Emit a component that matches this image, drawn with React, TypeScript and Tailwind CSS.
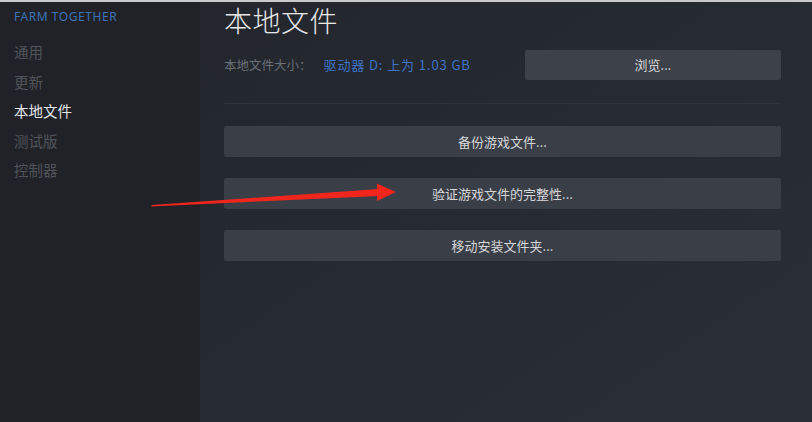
const cjk = { fontFamily: '"Noto Sans CJK SC", "Noto Sans", sans-serif' };

const navItems = [
  { label: "通用", active: false },
  { label: "更新", active: false },
  { label: "本地文件", active: true },
  { label: "测试版", active: false },
  { label: "控制器", active: false },
];

function ActionButton({ label }: { label: string }) {
  return (
    <button className="h-[31px] w-full rounded-[2px] bg-[#3a3e47] text-[13px] text-[#d6d7d9]">
      {label}
    </button>
  );
}

function Arrow() {
  return (
    <svg className="pointer-events-none absolute left-0 top-0" width="812" height="422">
      <defs>
        <filter id="blur" x="-10%" y="-50%" width="120%" height="200%">
          <feGaussianBlur stdDeviation="0.6" />
        </filter>
      </defs>
      <g filter="url(#blur)" fill="#f0261e">
        <polygon points="151,206.5 152,205 379,189 379,196" />
        <polygon points="377,183.5 396,192 377,201" />
      </g>
    </svg>
  );
}

export default function App() {
  return (
    <div className="relative flex h-[422px] w-[812px] flex-col overflow-hidden bg-[#23262d]" style={cjk}>
      <div className="h-[2px] w-full bg-[#c9cacd]" />
      <div className="flex flex-1">
        <aside className="w-[200px] bg-[#202227] pl-[14px] pt-[6px]">
          <div className="text-[12px] tracking-[0.55px] text-[#3d72b8]" style={{ fontFamily: '"Noto Sans", sans-serif' }}>
            FARM TOGETHER
          </div>
          <nav className="mt-[11px] flex flex-col">
            {navItems.map((item) => (
              <div
                key={item.label}
                className={`h-[29.5px] text-[14.5px] leading-[29.5px] ${item.active ? "text-[#e4e5e7]" : "text-[#50545b]"}`}
              >
                {item.label}
              </div>
            ))}
          </nav>
        </aside>
        <main className="flex-1 bg-gradient-to-br from-[#23262d] via-[#262a31] to-[#2a2e35] pl-[24px] pr-[31px]">
          <h1 className="mt-[-1px] text-[28px] font-light leading-[38px] tracking-[0.5px] text-[#e8e8e9]">本地文件</h1>
          <div className="mt-[11px] flex items-center">
            <div className="flex-1 text-[12.5px]">
              <span className="text-[#6b7078]">本地文件大小：</span>
              <span className="ml-[12px] text-[13px] tracking-[0.9px] text-[#3d74c6]">驱动器 D: 上为 1.03 GB</span>
            </div>
            <button className="h-[30px] w-[256px] rounded-[2px] bg-[#3d414a] text-[13px] text-[#d6d7d9]">
              浏览...
            </button>
          </div>
          <div className="mt-[23px] h-px w-full bg-[#30343b]" />
          <div className="mt-[22px] flex flex-col gap-[21px]">
            <ActionButton label="备份游戏文件..." />
            <ActionButton label="验证游戏文件的完整性..." />
            <ActionButton label="移动安装文件夹..." />
          </div>
        </main>
      </div>
      <Arrow />
    </div>
  );
}
